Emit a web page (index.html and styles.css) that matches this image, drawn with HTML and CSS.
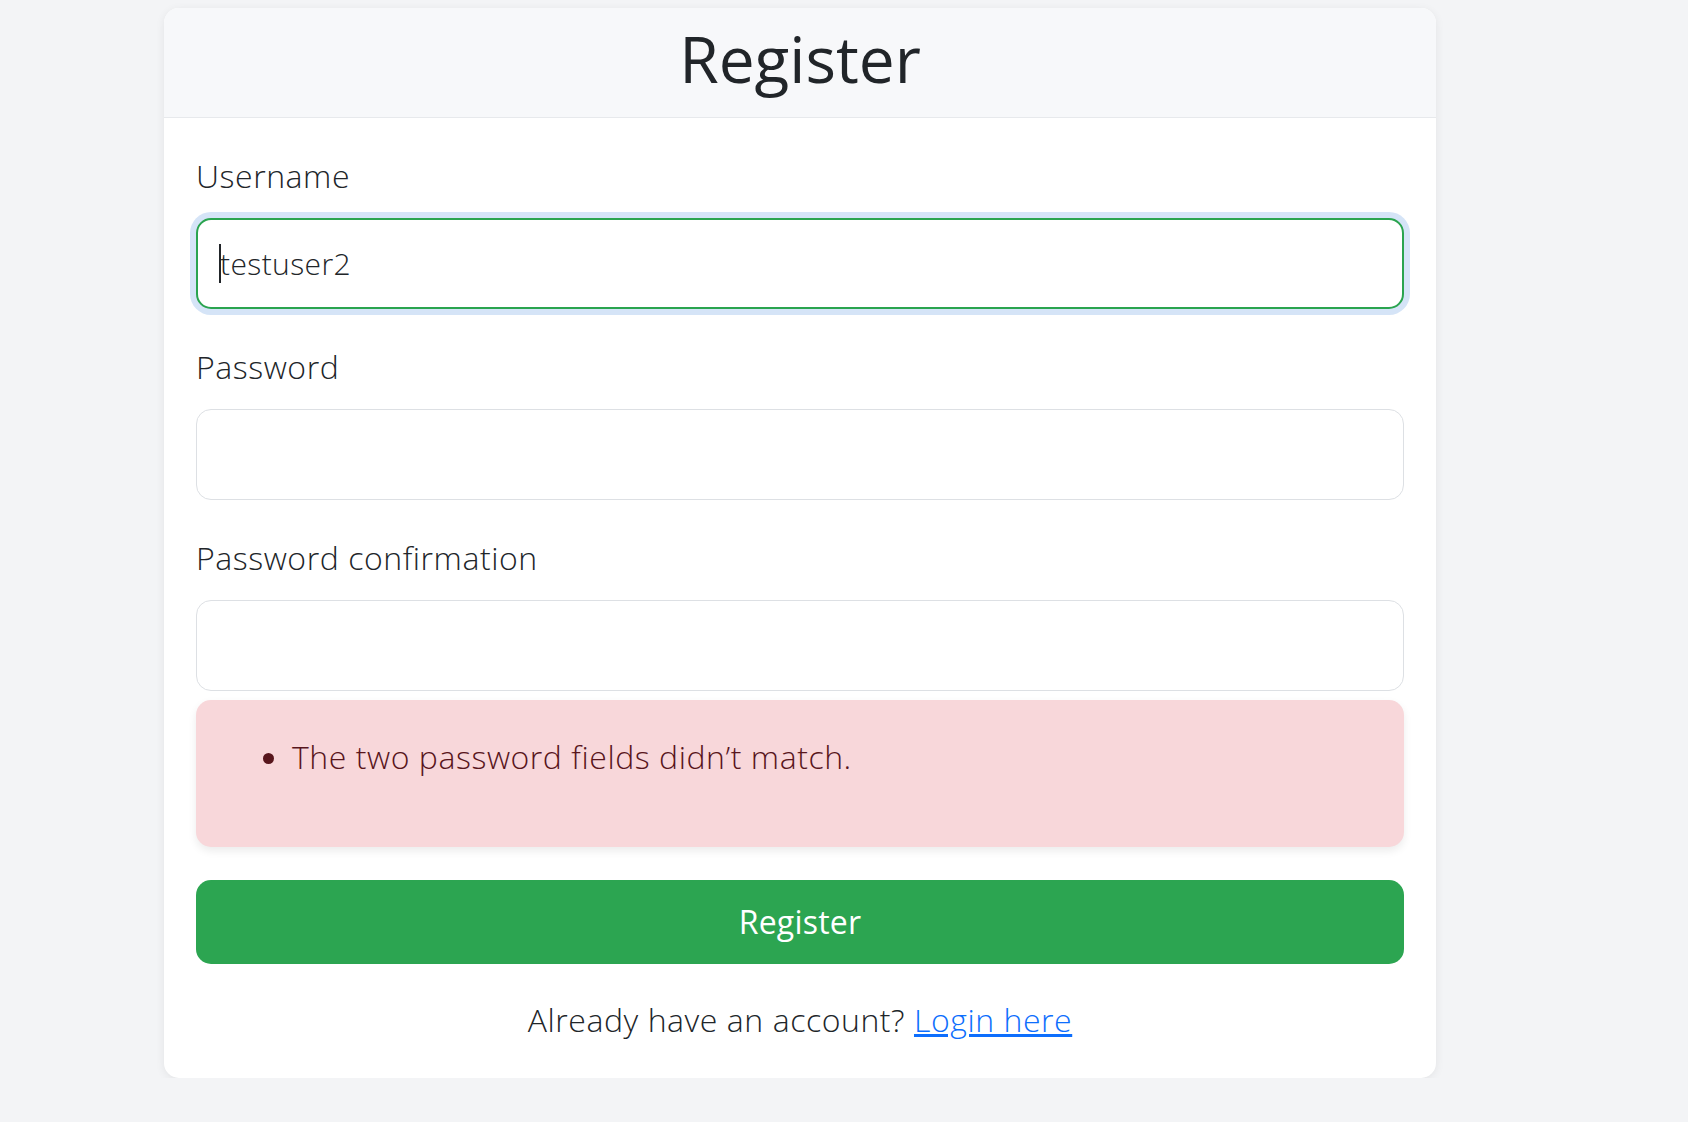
FILE: index.html
```html
<!DOCTYPE html>
<html lang="en">
<head>
<meta charset="utf-8">
<title>Register</title>
<link rel="stylesheet" href="styles.css">
</head>
<body>
<main class="page">
  <section class="card">
    <header class="card-header">
      <h1 class="card-title">Register</h1>
    </header>
    <form class="card-body">
      <div class="field">
        <label class="field-label" for="username">Username</label>
        <div class="input-wrap">
          <input class="field-input is-focused" id="username" type="text" value="testuser2">
          <span class="caret"></span>
        </div>
      </div>
      <div class="field">
        <label class="field-label" for="password1">Password</label>
        <input class="field-input" id="password1" type="password">
      </div>
      <div class="field field-last">
        <label class="field-label" for="password2">Password confirmation</label>
        <input class="field-input" id="password2" type="password">
      </div>
      <div class="alert">
        <ul class="alert-list">
          <li>The two password fields didn’t match.</li>
        </ul>
      </div>
      <button class="btn-submit" type="button">Register</button>
      <p class="footer-text">Already have an account? <a class="footer-link" href="#">Login here</a></p>
    </form>
  </section>
</main>
</body>
</html>
```
FILE: styles.css
```css
* { box-sizing: border-box; }

html, body {
  margin: 0;
  padding: 0;
  background: #f3f4f6;
}

body {
  font-family: "Open Sans", "Noto Sans", "DejaVu Sans", sans-serif;
  font-weight: 350;
  letter-spacing: 0.55px;
  color: #212529;
}

.page {
  padding: 8px 0 0 164px;
}

.card {
  width: 1272px;
  background: #ffffff;
  border-radius: 15px;
  box-shadow: 0 2px 10px rgba(0, 0, 0, 0.07);
  overflow: hidden;
}

.card-header {
  height: 110px;
  background: #f7f8fa;
  border-bottom: 1px solid #e7e9ec;
  display: flex;
  justify-content: center;
}

.card-title {
  margin: 13px 0 0;
  font-size: 64px;
  font-weight: 500;
  letter-spacing: 0;
  line-height: 76.8px;
  color: #212529;
}

.card-body {
  display: flex;
  flex-direction: column;
  padding: 34px 32px;
}

.field {
  display: flex;
  flex-direction: column;
  margin-bottom: 34px;
}

.field-last {
  margin-bottom: 9px;
}

.field-label {
  font-size: 32px;
  line-height: 48px;
  margin-bottom: 18px;
}

.input-wrap {
  position: relative;
}

.field-input {
  display: block;
  width: 100%;
  height: 91px;
  border: 1px solid #dde0e4;
  border-radius: 15px;
  padding: 0 23px;
  font-family: inherit;
  font-weight: 350;
  letter-spacing: 0.4px;
  font-size: 30px;
  color: #212529;
  background: #ffffff;
  outline: none;
}

.field-input.is-focused {
  border: 2px solid #2aa44f;
  padding: 0 22px;
  box-shadow: 0 0 0 6px #d5e4f7;
}

.caret {
  position: absolute;
  left: 23px;
  top: 26px;
  width: 2px;
  height: 39px;
  background: #212529;
}

.alert {
  background: #f8d7da;
  color: #58151c;
  border-radius: 15px;
  padding: 33px 32px 32px;
  box-shadow: 0 4px 8px rgba(0, 0, 0, 0.08);
}

.alert-list {
  margin: 0 0 34px;
  padding-left: 64px;
  font-size: 32px;
  line-height: 48px;
}

.btn-submit {
  margin-top: 33px;
  height: 84px;
  width: 100%;
  border: none;
  border-radius: 15px;
  background: #2ca551;
  color: #ffffff;
  font-family: inherit;
  font-weight: 400;
  letter-spacing: 0.2px;
  font-size: 32px;
  line-height: 48px;
  cursor: pointer;
}

.footer-text {
  margin: 32px 0 0;
  text-align: center;
  font-size: 32px;
  line-height: 48px;
}

.footer-link {
  color: #0d6efd;
  text-decoration: underline;
}
```
